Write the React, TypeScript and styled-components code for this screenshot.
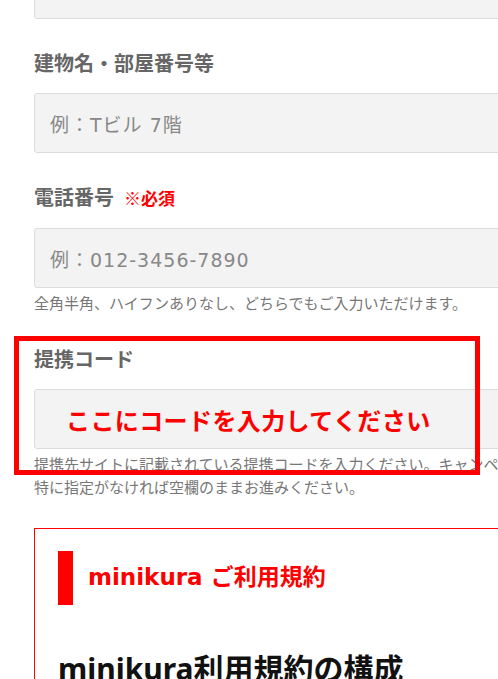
import React from "react";
import styled, { createGlobalStyle } from "styled-components";

const Global = createGlobalStyle`
  html, body { margin: 0; padding: 0; background: #fff; overflow: hidden; }
  body { font-family: "Noto Sans CJK JP", "Noto Sans", sans-serif; }
`;

const Page = styled.div`
  position: relative;
  width: 498px;
  height: 679px;
  overflow: hidden;
`;

const Form = styled.div`
  width: 700px;
  padding-left: 34px;
  margin-top: -41px;
  display: flex;
  flex-direction: column;
`;

const Field = styled.div`
  display: flex;
  flex-direction: column;
  margin-bottom: 29px;
`;

const Label = styled.div`
  font-size: 20px;
  line-height: 30px;
  font-weight: bold;
  color: #666;
  margin-bottom: 15px;
  display: flex;
  align-items: baseline;
  gap: 10px;
`;

const Required = styled.span`
  font-size: 17px;
  color: #ff0000;
  font-weight: bold;
`;

const Input = styled.div<{ $accent?: boolean }>`
  box-sizing: border-box;
  height: 60px;
  width: 640px;
  background: #f3f3f3;
  border: 1px solid #dcdcdc;
  border-radius: 3px;
  display: flex;
  align-items: center;
  white-space: nowrap;
  padding-left: 15px;
  font-family: "DejaVu Sans", "Noto Sans CJK JP", sans-serif;
  font-size: 19px;
  color: #888;
  letter-spacing: 1px;
`;

const AccentText = styled.span`
  font-family: "Noto Sans CJK JP", sans-serif;
  padding-left: 16px;
  font-size: 24px;
  font-weight: bold;
  color: #ff0000;
  letter-spacing: 0.4px;
`;

const Help = styled.div`
  font-size: 15px;
  line-height: 23px;
  color: #777;
  margin-top: 3px;
  margin-bottom: 1px;
  white-space: nowrap;
`;

const Terms = styled.div`
  box-sizing: border-box;
  width: 640px;
  border: 1px solid #ff0000;
  padding: 22px 23px 0;
`;

const TermsHead = styled.div`
  display: flex;
  align-items: center;
  gap: 15px;
  height: 54px;
`;

const Bar = styled.div`
  width: 15px;
  height: 54px;
  background: #ff0000;
`;

const TermsTitle = styled.div`
  font-family: "DejaVu Sans", "Noto Sans CJK JP", sans-serif;
  font-size: 23px;
  font-weight: bold;
  color: #ff0000;
  margin-top: -6px;
`;

const Section = styled.div`
  font-family: "Noto Sans", "Noto Sans CJK JP", sans-serif;
  font-size: 30px;
  font-weight: bold;
  color: #111;
  margin-top: 42px;
  line-height: 44px;
  white-space: nowrap;
`;

const Highlight = styled.div`
  position: absolute;
  left: 14px;
  top: 336px;
  width: 466px;
  height: 139px;
  box-sizing: border-box;
  border: 5px solid #ff0000;
  pointer-events: none;
`;

export default function App() {
  return (
    <Page>
      <Global />
      <Form>
        <Field>
          <Input />
        </Field>
        <Field>
          <Label>建物名・部屋番号等</Label>
          <Input>例：Tビル 7階</Input>
        </Field>
        <Field>
          <Label>
            電話番号<Required>※必須</Required>
          </Label>
          <Input>例：012-3456-7890</Input>
          <Help>全角半角、ハイフンありなし、どちらでもご入力いただけます。</Help>
        </Field>
        <Field>
          <Label>提携コード</Label>
          <Input>
            <AccentText>ここにコードを入力してください</AccentText>
          </Input>
          <Help>
            提携先サイトに記載されている提携コードを入力ください。キャンペーンコードとは異なります。
            <br />
            特に指定がなければ空欄のままお進みください。
          </Help>
        </Field>
        <Terms>
          <TermsHead>
            <Bar />
            <TermsTitle>minikura ご利用規約</TermsTitle>
          </TermsHead>
          <Section>minikura利用規約の構成</Section>
        </Terms>
      </Form>
      <Highlight />
    </Page>
  );
}
